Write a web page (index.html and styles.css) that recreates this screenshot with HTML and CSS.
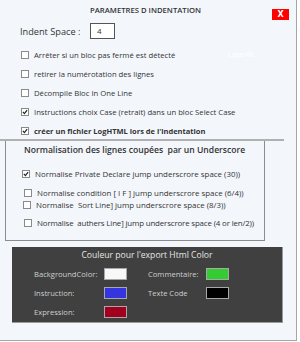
FILE: index.html
```html
<!DOCTYPE html>
<html lang="fr">
<head>
  <meta charset="UTF-8" />
  <title>Parametres d'indentation</title>
  <link rel="stylesheet" href="styles.css">
</head>
<body>
  <div class="fenetre">
    <div class="entete">
      <span class="titre">PARAMETRES D INDENTATION</span>
      <span class="fermer">X</span>
    </div>

    <div class="indent">
      <label>Indent Space :</label>
      <span class="champ">4</span>
    </div>

    <div class="options">
      <div class="opt"><span class="case"></span>Arrêter si un bloc pas fermé est détecté<span class="label48">Label48</span></div>
      <div class="opt"><span class="case"></span>retirer la numérotation des lignes</div>
      <div class="opt"><span class="case"></span>Décompile Bloc In One Line</div>
      <div class="opt"><span class="case coche"><svg viewBox="0 0 7 7"><path d="M1 3.3 L2.8 5.3 L6 1.2"/></svg></span>Instructions choix Case (retrait) dans un bloc Select Case</div>
      <div class="opt gras"><span class="case coche"><svg viewBox="0 0 7 7"><path d="M1 3.3 L2.8 5.3 L6 1.2"/></svg></span>créer un fichier LogHTML lors de l'indentation</div>
    </div>
    <div class="trait"></div>

    <div class="cadre">
      <div class="cadre-titre">Normalisation des lignes coupées&nbsp; par un Underscore</div>
      <div class="norm n1"><span class="case coche"><svg viewBox="0 0 7 7"><path d="M1 3.3 L2.8 5.3 L6 1.2"/></svg></span>Normalise Private Declare jump underscrore space (30))</div>
      <div class="norm n2"><span class="case"></span>Normalise condition [ I F ] jump underscrore space (6/4))</div>
      <div class="norm n3"><span class="case"></span>Normalise&nbsp; Sort Line] jump underscrore space (8/3))</div>
      <div class="norm n4"><span class="case"></span>Normalise&nbsp; authers Line] jump underscrore space (4 or len/2))</div>
    </div>

    <div class="couleurs">
      <div class="couleurs-titre">Couleur pour l'export Html Color</div>
      <div class="grille">
        <div class="col">
          <div class="ligne"><span class="nom">BackgroundColor:</span><span class="pastille blanc"></span></div>
          <div class="ligne"><span class="nom">Instruction:</span><span class="pastille bleu"></span></div>
          <div class="ligne"><span class="nom">Expression:</span><span class="pastille rouge"></span></div>
        </div>
        <div class="col">
          <div class="ligne"><span class="nom">Commentaire:</span><span class="pastille vert"></span></div>
          <div class="ligne"><span class="nom">Texte Code</span><span class="pastille noir"></span></div>
        </div>
      </div>
    </div>
  </div>
</body>
</html>
```

FILE: styles.css
```css
body {
  margin: 0;
  background: #fff;
  font-family: "Open Sans", "Noto Sans", sans-serif;
  color: #333;
}
.fenetre {
  width: 296px;
  height: 340px;
  background: #f3f7fc;
  border-right: 1px solid #a6a6a6;
  border-bottom: 1px solid #a6a6a6;
  overflow: hidden;
}
.entete {
  display: flex;
  justify-content: space-between;
  align-items: flex-start;
  padding-top: 5px;
  height: 18px;
}
.titre {
  font-size: 7.7px;
  font-weight: 600;
  color: #333;
  margin-left: 90px;
}
.fermer {
  width: 17px;
  height: 11px;
  margin-top: 4px;
  margin-right: 7px;
  background: #f00;
  color: #fff;
  font-family: "DejaVu Sans", sans-serif;
  font-weight: bold;
  font-size: 8px;
  line-height: 11px;
  text-align: center;
}
.indent {
  display: flex;
  align-items: center;
  height: 16px;
  padding-left: 20px;
}
.indent label {
  font-size: 9.2px;
  color: #333;
  width: 70px;
}
.champ {
  width: 17px;
  height: 14px;
  border: 1px solid #555;
  background: #fff;
  font-size: 8px;
  line-height: 14px;
  padding-left: 6px;
}
.options {
  margin-top: 6px;
}
.opt {
  display: flex;
  align-items: center;
  height: 19px;
  padding-left: 21px;
  font-size: 7.7px;
  color: #333;
  position: relative;
}
.opt.gras {
  font-weight: bold;
  font-size: 7.5px;
}
.case {
  width: 6px;
  height: 6px;
  border: 1px solid #8a8a8a;
  background: #fff;
  margin-right: 5px;
  flex: none;
}
.case svg {
  display: block;
  width: 6px;
  height: 6px;
}
.case path {
  fill: none;
  stroke: #222;
  stroke-width: 1.4;
}
.label48 {
  position: absolute;
  left: 228px;
  font-size: 7px;
  color: #fff;
}
.trait {
  width: 284px;
  height: 2px;
  margin-top: -1px;
  background: #b0b0b0;
}
.cadre {
  margin-left: 5px;
  width: 258px;
  height: 99px;
  border: 1px solid #8c8c8c;
  border-top: none;
}
.cadre-titre {
  font-size: 8.6px;
  font-weight: 600;
  color: #333;
  padding-left: 18px;
  padding-top: 3px;
  height: 18px;
}
.norm {
  display: flex;
  align-items: center;
  height: 12px;
  font-size: 7.9px;
  color: #333;
  white-space: nowrap;
}
.n1 { margin-top: 6px; padding-left: 16px; }
.n2 { margin-top: 7px; padding-left: 18px; }
.n3 { margin-top: 0px; padding-left: 17px; }
.n4 { margin-top: 6px; padding-left: 18px; letter-spacing: -0.15px; }
.couleurs {
  margin-top: 6px;
  margin-left: 12px;
  width: 270px;
  height: 75px;
  background: #404040;
  border-right: 1px solid #9a9a9a;
  border-bottom: 1px solid #9a9a9a;
}
.couleurs-titre {
  text-align: center;
  color: #e6e6e6;
  font-size: 8.6px;
  padding-top: 2px;
  height: 15px;
}
.grille {
  display: flex;
  padding-left: 22px;
}
.col {
  display: flex;
  flex-direction: column;
}
.col + .col {
  margin-left: 21px;
}
.ligne {
  display: flex;
  align-items: center;
  height: 19px;
}
.nom {
  width: 70px;
  font-size: 7.6px;
  color: #cfcfcf;
}
.col + .col .nom {
  width: 58px;
}
.pastille {
  width: 21px;
  height: 10px;
  border: 1px solid #a8a8a8;
}
.blanc { background: #f8f8f8; }
.bleu { background: #3434e0; }
.rouge { background: #a3001f; }
.vert { background: #33cc33; }
.noir { background: #000; }
```
